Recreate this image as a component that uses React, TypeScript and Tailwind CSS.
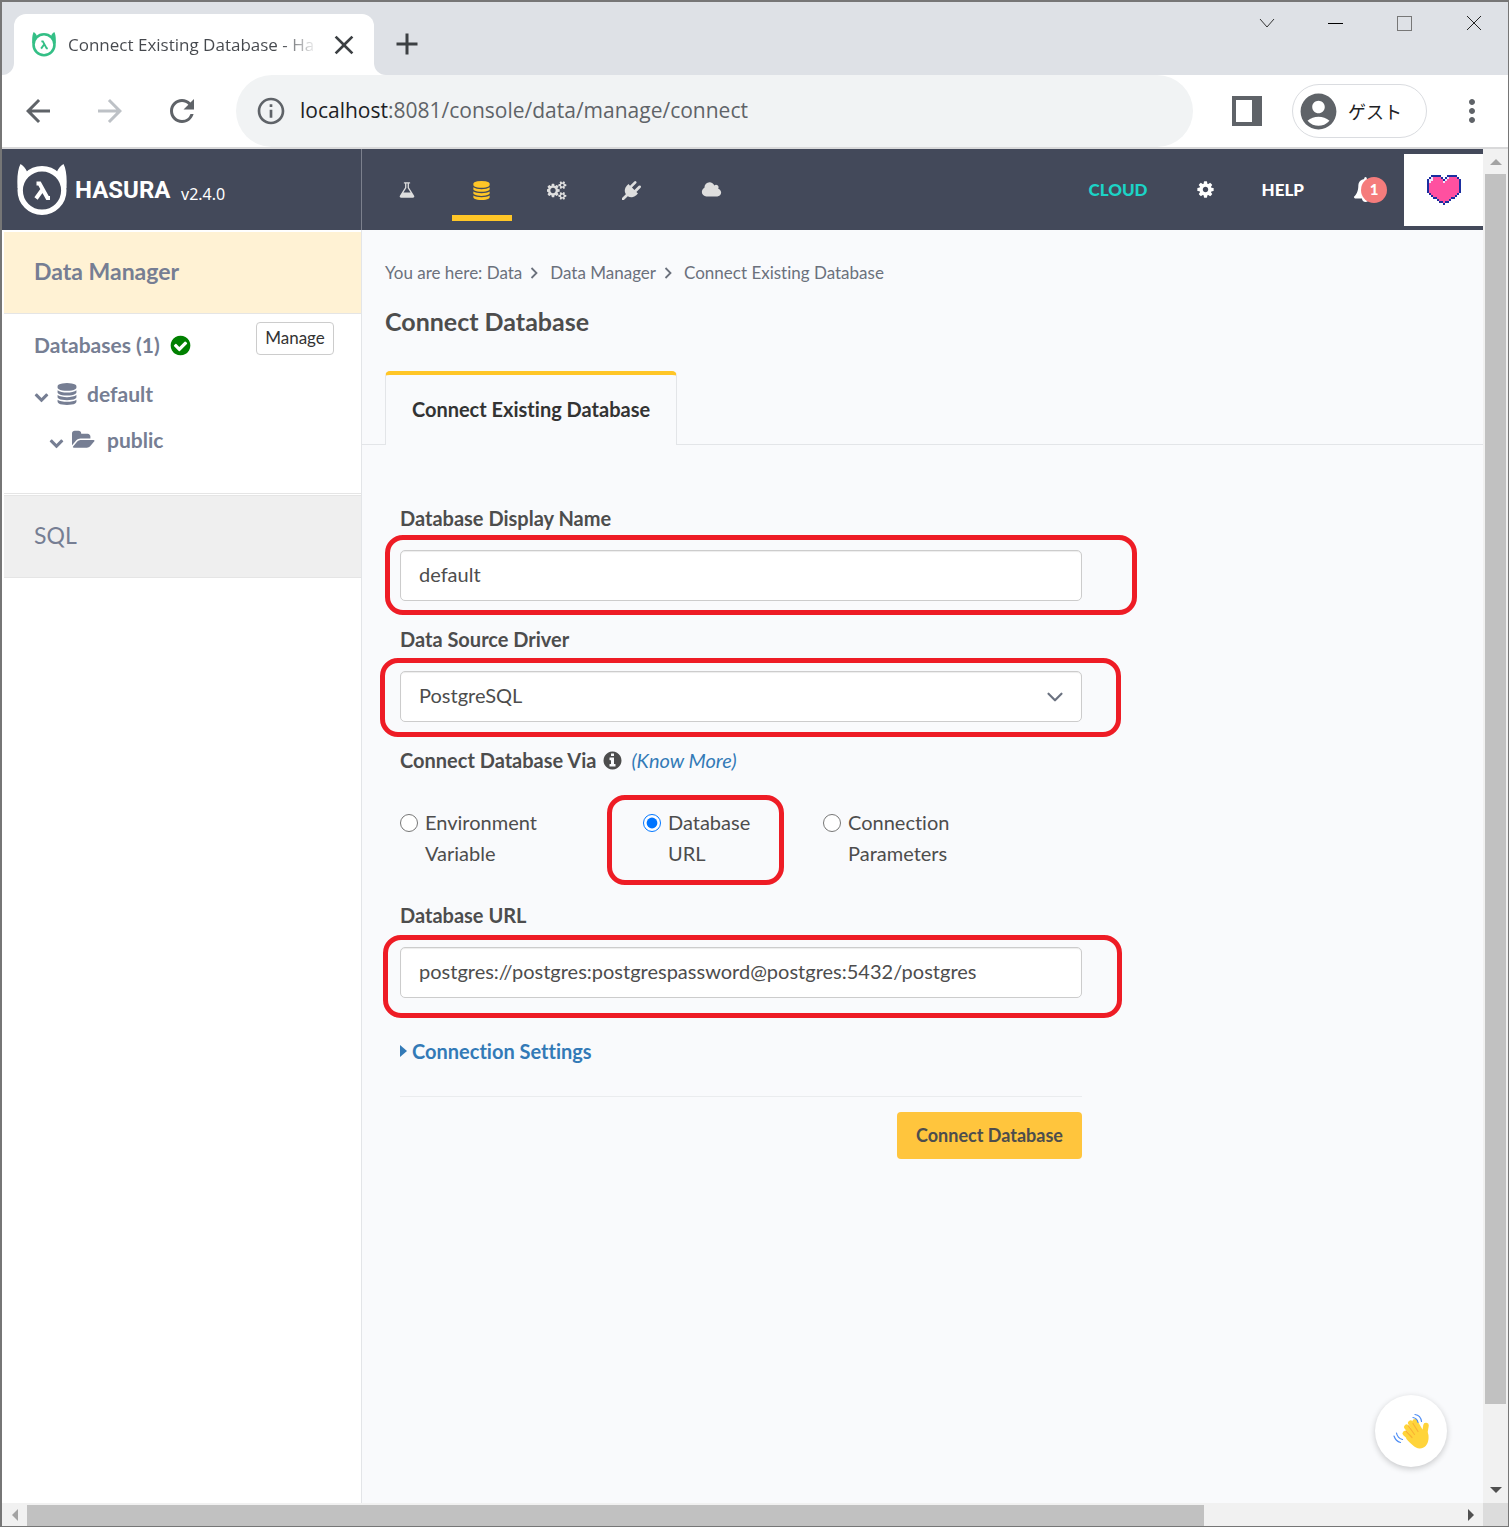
import React from "react";
import {
  MdAccountCircle,
  MdAdd,
  MdArrowBack,
  MdArrowForward,
  MdClose,
  MdInfoOutline,
  MdMoreVert,
  MdRefresh,
} from "react-icons/md";
import { ChevronDown } from "lucide-react";

const ICONS = {
  flask:
    "M1591 1448q56 89 21.5 152.5t-140.5 63.5h-1152q-106 0-140.5-63.5t21.5-152.5l503-793v-399h-64q-26 0-45-19t-19-45 19-45 45-19h512q26 0 45 19t19 45-19 45-45 19h-64v399zm-779-725l-272 429h712l-272-429-20-31v-436h-128v436z",
  database:
    "M896 768q237 0 443-43t325-127v170q0 69-103 128t-280 93.5-385 34.5-385-34.5-280-93.5-103-128v-170q119 84 325 127t443 43zm0 768q237 0 443-43t325-127v170q0 69-103 128t-280 93.5-385 34.5-385-34.5-280-93.5-103-128v-170q119 84 325 127t443 43zm0-384q237 0 443-43t325-127v170q0 69-103 128t-280 93.5-385 34.5-385-34.5-280-93.5-103-128v-170q119 84 325 127t443 43zm0-1152q208 0 385 34.5t280 93.5 103 128v128q0 69-103 128t-280 93.5-385 34.5-385-34.5-280-93.5-103-128v-128q0-69 103-128t280-93.5 385-34.5z",
  cogs:
    "M832 896q0-106-75-181t-181-75-181 75-75 181 75 181 181 75 181-75 75-181zm768 512q0-52-38-90t-90-38-90 38-38 90q0 53 37.5 90.5t90.5 37.5 90.5-37.5 37.5-90.5zm0-1024q0-52-38-90t-90-38-90 38-38 90q0 53 37.5 90.5t90.5 37.5 90.5-37.5 37.5-90.5zm-384 421v185q0 10-7 19.5t-16 10.5l-155 24q-11 35-32 76 34 48 90 115 7 11 7 20 0 12-7 19-23 30-82.5 89.5t-78.5 59.5q-11 0-21-7l-115-90q-37 19-77 31-11 108-23 155-7 24-30 24h-186q-11 0-20-7.5t-10-17.5l-23-153q-34-10-75-31l-118 89q-7 7-20 7-11 0-21-8-144-133-144-160 0-9 7-19 10-14 41-53t47-61q-23-44-35-82l-152-24q-10-1-17-9.5t-7-19.5v-185q0-10 7-19.5t16-10.5l155-24q11-35 32-76-34-48-90-115-7-11-7-20 0-12 7-20 22-30 82-89t79-59q11 0 21 7l115 90q34-18 77-32 11-108 23-154 7-24 30-24h186q11 0 20 7.5t10 17.5l23 153q34 10 75 31l118-89q8-7 20-7 11 0 21 8 144 133 144 160 0 8-7 19-12 16-42 54t-45 60q23 48 34 82l152 23q10 2 17 10.5t7 19.5zm640 533v140q0 16-149 31-12 27-30 52 51 113 51 138 0 4-4 7-122 71-124 71-8 0-46-47t-52-68q-20 2-30 2t-30-2q-14 21-52 68t-46 47q-2 0-124-71-4-3-4-7 0-25 51-138-18-25-30-52-149-15-149-31v-140q0-16 149-31 13-29 30-52-51-113-51-138 0-4 4-7 4-2 35-20t59-34 30-16q8 0 46 46.5t52 67.5q20-2 30-2t30 2q51-71 92-112l6-2q4 0 124 70 4 3 4 7 0 25-51 138 17 23 30 52 149 15 149 31zm0-1024v140q0 16-149 31-12 27-30 52 51 113 51 138 0 4-4 7-122 71-124 71-8 0-46-47t-52-68q-20 2-30 2t-30-2q-14 21-52 68t-46 47q-2 0-124-71-4-3-4-7 0-25 51-138-18-25-30-52-149-15-149-31v-140q0-16 149-31 13-29 30-52-51-113-51-138 0-4 4-7 4-2 35-20t59-34 30-16q8 0 46 46.5t52 67.5q20-2 30-2t30 2q51-71 92-112l6-2q4 0 124 70 4 3 4 7 0 25-51 138 17 23 30 52 149 15 149 31z",
  plug:
    "M1755 453q37 38 37 90.5t-37 90.5l-401 400 150 150-160 160q-163 163-389.5 186.5t-411.5-100.5l-362 362h-181v-181l362-362q-124-185-100.5-411.5t186.5-389.5l160-160 150 150 400-401q38-37 91-37t90 37 37 90.5-37 90.5l-400 401 234 234 401-400q38-37 91-37t90 37z",
  cloud:
    "M1984 1152q0 159-112.5 271.5t-271.5 112.5h-1088q-185 0-316.5-131.5t-131.5-316.5q0-132 71-241.5t187-163.5q-2-28-2-43 0-212 150-362t362-150q158 0 286.5 88t187.5 230q70-62 166-62 106 0 181 75t75 181q0 75-41 138 129 30 213 134.5t84 239.5z",
  cog:
    "M1152 896q0-106-75-181t-181-75-181 75-75 181 75 181 181 75 181-75 75-181zm512-109v222q0 12-8 23t-20 13l-185 28q-19 54-39 91 35 50 107 138 10 12 10 25t-9 23q-27 37-99 108t-94 71q-12 0-26-9l-138-108q-44 23-91 38-16 136-29 186-7 28-36 28h-222q-14 0-24.5-8.5t-11.5-21.5l-28-184q-49-16-90-37l-141 107q-10 9-25 9-14 0-25-11-126-114-165-168-7-10-7-23 0-12 8-23 15-21 51-66.5t54-70.5q-27-50-41-99l-183-27q-13-2-21-12.5t-8-23.5v-222q0-12 8-23t19-13l186-28q14-46 39-92-40-57-107-138-10-12-10-24 0-10 9-23 26-36 98.5-107.5t94.5-71.5q13 0 26 10l138 107q44-23 91-38 16-136 29-186 7-28 36-28h222q14 0 24.5 8.500t11.500 21.500l28 184q49 16 90 37l142-107q9-9 24-9 13 0 25 10 129 119 165 170 7 8 7 22 0 12-8 23-15 21-51 66.500t-54 70.500q26 50 41 98l183 28q13 2 21 12.500t8 23.500z",
  bell:
    "M1728 1408q0 52-38 90t-90 38h-448q0 106-75 181t-181 75-181-75-75-181h-448q-52 0-90-38t-38-90q50-42 91-88t85-119.500 74.500-158.500 50-206 19.500-260q0-152 117-282.500t307-158.500q-8-19-8-39 0-40 28-68t68-28 68 28 28 68q0 20-8 39 190 28 307 158.500t117 282.500q0 139 19.500 260t50 206 74.500 158.500 85 119.500 91 88z",
  check:
    "M1412 734q0-28-18-46l-91-90q-19-19-45-19t-45 19l-408 407-226-226q-19-19-45-19t-45 19l-91 90q-18 18-18 46 0 27 18 45l362 362q19 19 45 19 27 0 46-19l543-543q18-18 18-45zm252 162q0 209-103 385.5t-279.5 279.5-385.5 103-385.5-103-279.5-279.5-103-385.5 103-385.5 279.5-279.5 385.5-103 385.5 103 279.5 279.5 103 385.5z",
  chevron:
    "M1683 808l-742 741q-19 19-45 19t-45-19l-742-741q-19-19-19-45.5t19-45.5l166-165q19-19 45-19t45 19l531 531 531-531q19-19 45-19t45 19l166 165q19 19 19 45.5t-19 45.5z",
  folder:
    "M1879 952q0 31-31 66l-336 396q-43 51-120.5 86.5t-143.5 35.5h-1088q-34 0-60.500-13t-26.500-43q0-31 31-66l336-396q43-51 120.500-86.500t143.500-35.500h1088q34 0 60.500 13t26.500 43zm-343-344v160h-832q-94 0-197 47.500t-164 119.500l-337 396-5 6q0-4-.5-12.500t-.5-12.500v-960q0-92 66-158t158-66h320q92 0 158 66t66 158v32h544q92 0 158 66t66 158z",
  info:
    "M1152 1376v-160q0-14-9-23t-23-9h-96v-512q0-14-9-23t-23-9h-320q-14 0-23 9t-9 23v160q0 14 9 23t23 9h96v320h-96q-14 0-23 9t-9 23v160q0 14 9 23t23 9h448q14 0 23-9t9-23zm-128-896v-160q0-14-9-23t-23-9h-192q-14 0-23 9t-9 23v160q0 14 9 23t23 9h192q14 0 23-9t9-23zm640 416q0 209-103 385.5t-279.5 279.5-385.5 103-385.5-103-279.5-279.5-103-385.5 103-385.5 279.5-279.5 385.5-103 385.5 103 279.5 279.5 103 385.5z",
};

function Icon({
  name,
  className,
  box = "0 0 1792 1792",
}: {
  name: keyof typeof ICONS;
  className: string;
  box?: string;
}) {
  return (
    <svg viewBox={box} fill="currentColor" className={className} aria-hidden="true">
      <path d={ICONS[name]} />
    </svg>
  );
}

function HasuraMark({ className }: { className: string }) {
  return (
    <svg viewBox="0 0 50 52" className={className} fill="none" aria-hidden="true">
      <circle cx="25" cy="26.500" r="21.800" stroke="currentColor" strokeWidth="5.400" />
      <path
        d="M0.600 24C-0.200 14 0.800 5 3.500 0c3 1.500 5 4.500 6.500 7.500L4 24zM49.400 24C50.200 14 49.200 5 46.500 0c-3 1.500-5 4.500-6.500 7.500L46 24z"
        fill="currentColor"
      />
      <path
        d="M19.500 19.500h3l8 14.500h2.500M25.500 25.500L19 34.500"
        stroke="currentColor"
        strokeWidth="4"
      />
    </svg>
  );
}

const HEART = [
  "..BBBBB...BBBBB..",
  ".BWPPPPB.BWPPPPB.",
  "BWWPPPPPBWPPPPPPB",
  "BWPPPPPPWPPPPPPPB",
  "BPPPPPPPPPPPPPPPB",
  "BPPPPPPPPPPPPPPPB",
  "BPPPPPPPPPPPPPPPB",
  "BPPPPPPPPPPPPPPPB",
  "BPPPPPPPPPPPPPPPB",
  ".BPPPPPPPPPPPPPB.",
  "..BPPPPPPPPPPPB..",
  "...BBPPPPPPPBB...",
  ".....BPPPPPB.....",
  "......BBPBB......",
  "........B........",
];
const HEART_COLORS: Record<string, string> = { B: "#1b2fa0", P: "#ff50a0", W: "#f4e6fb" };

function PixelHeart() {
  return (
    <svg viewBox="0 0 17 15" shapeRendering="crispEdges" className="h-[30px] w-[36px]" aria-hidden="true">
      {HEART.flatMap((row, y) =>
        row.split("").map((c, x) =>
          c === "." ? null : (
            <rect key={`${x}-${y}`} x={x} y={y} width="1" height="1" fill={HEART_COLORS[c]} />
          ),
        ),
      )}
    </svg>
  );
}

function WavingHand() {
  return (
    <svg viewBox="0 0 36 36" className="h-9 w-9" fill="none" strokeLinecap="round" aria-hidden="true">
      <g stroke="#ffd43b" strokeWidth="5">
        <path d="M12 20.500l10 9M13.500 14l10 11M17.500 10l9 13M22 8.500l8 14" />
        <path d="M33 12.500l-2 12" strokeWidth="5.500" />
      </g>
      <path
        d="M16 23.500L29 16.500C35 17 36 21 35.500 26 35 32 31 35.800 26.500 35.500 22 35.200 17 30 13 25.500z"
        fill="#ffd43b"
      />
      <path d="M13 18l6 6.500M15.500 13l6 8.500M20 10.500l5 8" stroke="#f9b233" strokeWidth="1.200" />
      <path
        d="M22 1.500c3.500.5 6 3 6.500 7M20 4.500c3 .5 4.500 2.500 5 5M3.500 20c.5 3 2.500 5.500 6 6.500M1 23c1 3 3 5.500 6.500 6.500"
        stroke="#4e8df5"
        strokeWidth="1.200"
      />
    </svg>
  );
}

function TitleBar() {
  return (
    <div className="flex h-[73px] shrink-0 items-end bg-[#dee1e6]">
      <div className="h-3 w-3 bg-white">
        <div className="h-3 w-3 rounded-br-xl bg-[#dee1e6]" />
      </div>
      <div className="flex h-[61px] w-[360px] items-center rounded-t-xl bg-white pl-[18px]">
        <HasuraMark className="h-[25px] w-6 text-[#34bf86]" />
        <span className="ml-3 w-[250px] shrink-0 bg-linear-to-r from-[#45484d] from-85% to-transparent to-100% bg-clip-text font-['Open_Sans','Noto_Sans',sans-serif] text-[17px] whitespace-nowrap text-transparent">
          Connect Existing Database - Ha
        </span>
        <button type="button" aria-label="Close tab" className="ml-[10px] text-[#3c4043]">
          <MdClose className="size-8" />
        </button>
      </div>
      <div className="h-3 w-3 bg-white">
        <div className="h-3 w-3 rounded-bl-xl bg-[#dee1e6]" />
      </div>
      <button type="button" aria-label="New tab" className="mb-[13px] ml-[3px] text-[#3c4043]">
        <MdAdd className="size-9" />
      </button>
      <div className="ml-auto flex self-start">
        <button type="button" aria-label="Search tabs" className="flex h-[42px] w-[69px] items-center justify-center">
          <svg viewBox="0 0 16 16" className="size-4" fill="none" stroke="#333"><path d="M1 4l7 8 7-8" /></svg>
        </button>
        <button type="button" aria-label="Minimize" className="flex h-[42px] w-[69px] items-center justify-center">
          <span className="h-px w-[15px] bg-black" />
        </button>
        <button type="button" aria-label="Maximize" className="flex h-[42px] w-[69px] items-center justify-center">
          <span className="size-[15px] border border-[#777]" />
        </button>
        <button type="button" aria-label="Close" className="flex h-[42px] w-[69px] items-center justify-center">
          <svg viewBox="0 0 16 16" className="size-4" fill="none" stroke="#222"><path d="M1 1l14 14M15 1L1 15" /></svg>
        </button>
      </div>
    </div>
  );
}

function Toolbar() {
  return (
    <div className="flex h-[74px] shrink-0 items-center border-b-2 border-[#d9d9da] bg-white text-[#5f6368]">
      <button type="button" aria-label="Back" className="flex w-[72px] justify-center">
        <MdArrowBack className="size-9" />
      </button>
      <button type="button" aria-label="Forward" className="flex w-[72px] justify-center text-[#bdc1c6]">
        <MdArrowForward className="size-9" />
      </button>
      <button type="button" aria-label="Reload" className="flex w-[72px] justify-center">
        <MdRefresh className="size-9" />
      </button>
      <div className="ml-[18px] flex h-[72px] flex-1 items-center rounded-full bg-[#f1f3f4] pl-[19px]">
        <MdInfoOutline className="size-8" />
        <span className="ml-[13px] font-['Open_Sans','Noto_Sans',sans-serif] text-[21px]">
          <span className="text-[#202124]">localhost</span>:8081/console/data/manage/connect
        </span>
      </div>
      <button type="button" aria-label="Side panel" className="ml-[39px] flex size-[30px] items-center bg-[#5f6368] pl-1">
        <span className="h-[22px] w-4 bg-white" />
      </button>
      <button
        type="button"
        className="ml-[30px] flex h-[54px] w-[135px] items-center rounded-full border border-[#dadce0] pl-1 font-['Noto_Sans_CJK_JP',sans-serif] text-[18px] text-[#202124]"
      >
        <MdAccountCircle className="size-[43px] text-[#5f6368]" />
        <span className="ml-2">ゲスト</span>
      </button>
      <button type="button" aria-label="Menu" className="mr-[18px] ml-[27px]">
        <MdMoreVert className="size-9" />
      </button>
    </div>
  );
}

function NavLink({ label, active, wide, children }: { label: string; active?: boolean; wide?: boolean; children: React.ReactNode }) {
  return (
    <a
      href="#"
      aria-label={label}
      className={`flex h-full flex-col items-center ${wide ? "w-[85px]" : "w-[75px]"} ${active ? "text-[#ffc627]" : "text-[#dedede]"}`}
    >
      <span className="flex h-[66px] items-center pt-4">{children}</span>
      {active && <span className="h-[6px] w-[60px] bg-[#ffc627]" />}
    </a>
  );
}

function AppHeader() {
  return (
    <header className="flex h-[81px] shrink-0 bg-[#43495a] text-white">
      <div className="flex w-[360px] shrink-0 items-center border-r border-[#7c808d] pl-[15px]">
        <HasuraMark className="h-[52px] w-[50px]" />
        <span className="ml-2 w-[92px] font-[Roboto,sans-serif] text-[24px] font-bold">HASURA</span>
        <span className="ml-[14px] pt-2 font-['Noto_Sans',sans-serif] text-[16px]">v2.4.0</span>
      </div>
      <nav className="flex pl-[7px]">
        <NavLink label="API"><Icon name="flask" className="size-[18px]" /></NavLink>
        <NavLink label="Data" active><Icon name="database" className="size-[19px]" /></NavLink>
        <NavLink label="Actions"><Icon name="cogs" box="0 0 1920 1792" className="h-[19px] w-5" /></NavLink>
        <NavLink label="Remote schemas"><Icon name="plug" className="size-[19px]" /></NavLink>
        <NavLink label="Events" wide><Icon name="cloud" box="0 0 2048 1792" className="h-[18px] w-[21px]" /></NavLink>
      </nav>
      <div className="ml-auto flex items-center text-[17px] font-black">
        <a href="#" className="text-[#1cd3c6]">CLOUD</a>
        <button type="button" aria-label="Settings" className="ml-[48px]">
          <Icon name="cog" className="size-[19px]" />
        </button>
        <a href="#" className="ml-[47px]">HELP</a>
        <button type="button" aria-label="Notifications" className="ml-[49px] flex items-center">
          <Icon name="bell" className="size-[25px]" />
          <span className="-ml-[17px] flex size-[26px] items-center justify-center rounded-full bg-[#f57c7c] text-[15px]">1</span>
        </button>
        <button type="button" aria-label="Love" className="ml-[17px] flex h-[72px] w-[79px] items-center justify-center bg-white">
          <PixelHeart />
        </button>
      </div>
    </header>
  );
}

function Sidebar() {
  return (
    <aside className="w-[360px] shrink-0 border-r border-[#e3e5e8] bg-white pl-0.5 text-[#767e93]">
      <a href="#" className="mt-0.5 flex h-[82px] items-center border-b border-[#e5e5e5] bg-[#fff2d4] pb-0.5 pl-[30px] text-[23px] font-bold">
        Data Manager
      </a>
      <div className="h-[180px] border-b border-[#e5e5e5] pl-[30px] text-[21px] font-bold">
        <div className="flex h-[57px] items-start justify-between pt-2 pr-[27px]">
          <span className="flex h-[46px] items-center gap-[9px]">
            Databases (1)
            <Icon name="check" className="size-[23px] text-[#008000]" />
          </span>
          <button type="button" className="h-[33px] w-[78px] rounded-sm border border-[#ccc] bg-white pb-0.5 text-[17px] font-normal text-[#333]">
            Manage
          </button>
        </div>
        <div className="flex h-[46px] items-center">
          <Icon name="chevron" className="mt-1 size-[15px]" />
          <Icon name="database" className="ml-[7px] size-[22px]" />
          <span className="ml-[9px]">default</span>
        </div>
        <div className="flex h-[46px] items-center pl-[15px]">
          <Icon name="chevron" className="mt-1 size-[15px]" />
          <Icon name="folder" box="0 0 1920 1792" className="ml-2 h-[22px] w-[23px]" />
          <span className="ml-3">public</span>
        </div>
      </div>
      <a href="#" className="mt-px flex h-[83px] items-center border-y border-[#e5e5e5] bg-[#efefef] pb-0.5 pl-[30px] text-[23px]">
        SQL
      </a>
    </aside>
  );
}

function Highlight({ className }: { className: string }) {
  return <span className={`pointer-events-none absolute rounded-[18px] border-[5px] border-[#ee1c25] ${className}`} />;
}

const fieldClass =
  "h-[51px] w-full rounded-[5px] border border-[#ccc] bg-white px-[18px] pb-[3px] shadow-[inset_0_1px_1px_rgba(0,0,0,0.075)]";
const labelClass = "text-[20px] leading-7 font-bold";

function ConnectForm() {
  return (
    <form className="mt-[59px] ml-[38px] w-[682px] max-w-full text-[20px] text-[#4d4d4d]" onSubmit={(e) => e.preventDefault()}>
      <label htmlFor="db-name" className={`block ${labelClass}`}>Database Display Name</label>
      <div className="relative mt-[18px]">
        <input id="db-name" defaultValue="default" className={fieldClass} />
        <Highlight className="-top-[15px] -right-[55px] -bottom-[14px] -left-[15px]" />
      </div>
      <label htmlFor="driver" className={`mt-6 block ${labelClass}`}>Data Source Driver</label>
      <div className="relative mt-[18px]">
        <select id="driver" className={`appearance-none ${fieldClass}`}>
          <option>PostgreSQL</option>
        </select>
        <ChevronDown className="pointer-events-none absolute top-[13px] right-[14px] size-[26px] text-[#6b7280]" />
        <Highlight className="-top-[13px] -right-[39px] -bottom-[15px] -left-5" />
      </div>
      <fieldset className="mt-6">
        <legend className={`flex items-center ${labelClass}`}>
          Connect Database Via
          <Icon name="info" className="ml-[6px] size-[21px]" />
          <a href="#" className="ml-2 font-normal text-[#337ab7] italic">(Know More)</a>
        </legend>
        <div className="mt-[33px] grid grid-cols-[243px_180px_1fr] leading-[31px]">
          <label className="flex w-[150px] items-start gap-[7px]">
            <input type="radio" name="via" className="mt-[7px] size-[18px] shrink-0" />
            Environment Variable
          </label>
          <label className="relative flex w-[110px] items-start gap-[7px]">
            <input type="radio" name="via" defaultChecked className="mt-[7px] size-[18px] shrink-0" />
            Database URL
            <Highlight className="-top-3 -right-[31px] -bottom-4 -left-9" />
          </label>
          <label className="flex w-[150px] items-start gap-[7px]">
            <input type="radio" name="via" className="mt-[7px] size-[18px] shrink-0" />
            Connection Parameters
          </label>
        </div>
      </fieldset>
      <label htmlFor="db-url" className={`mt-8 block ${labelClass}`}>Database URL</label>
      <div className="relative mt-[18px]">
        <input id="db-url" defaultValue="postgres://postgres:postgrespassword@postgres:5432/postgres" className={fieldClass} />
        <Highlight className="-top-3 -right-10 -bottom-5 -left-[17px]" />
      </div>
      <button type="button" className="mt-[39px] flex h-7 items-center gap-[5px] font-bold text-[#337ab7]">
        <span className="border-y-[6px] border-l-[7px] border-y-transparent border-l-[#337ab7]" />
        Connection Settings
      </button>
      <hr className="mt-[31px] border-[#eaecee]" />
      <div className="mt-[15px] flex justify-end">
        <button type="submit" className="h-[47px] w-[185px] rounded-sm bg-[#ffc53d] text-[18px] font-bold">
          Connect Database
        </button>
      </div>
    </form>
  );
}

function Crumb() {
  return (
    <svg viewBox="0 0 8 12" className="mr-3 ml-2 h-3 w-2" fill="none" stroke="currentColor" strokeWidth="1.800" aria-hidden="true">
      <path d="M1.500 1l5 5-5 5" />
    </svg>
  );
}

function Main() {
  return (
    <main className="relative min-w-0 flex-1 bg-[#f9fafc]">
      <nav aria-label="Breadcrumb" className="flex items-center pt-8 pl-[23px] text-[17px] leading-[22px] text-[#6b717c]">
        <span>You are here: <a href="#">Data</a></span>
        <Crumb />
        <a href="#">Data Manager</a>
        <Crumb />
        <span>Connect Existing Database</span>
      </nav>
      <h2 className="mt-[21px] pl-[23px] text-[25px] leading-8 font-bold text-[#4d4d4d]">Connect Database</h2>
      <div className="mt-[34px] flex border-b border-[#e3e5e8] pl-[23px]">
        <a
          href="#"
          className="-mb-px flex h-[74px] w-[292px] items-center justify-center rounded-t-[5px] border-x border-t-4 border-x-[#e3e5e8] border-t-[#ffc627] bg-[#f9fafc] pb-[3px] text-[20px] font-bold text-[#333]"
        >
          Connect Existing Database
        </a>
      </div>
      <ConnectForm />
      <button
        type="button"
        aria-label="Say hello"
        className="absolute right-9 bottom-9 flex size-[72px] items-center justify-center rounded-full bg-white shadow-[0_2px_6px_rgba(0,0,0,0.2)]"
      >
        <WavingHand />
      </button>
    </main>
  );
}

export default function App() {
  return (
    <div className="flex h-screen flex-col border-2 border-r border-b border-[#767676] bg-white font-[Lato,'Noto_Sans',sans-serif] [font-variant-ligatures:none]">
      <TitleBar />
      <Toolbar />
      <div className="flex min-h-0 flex-1">
        <div className="flex min-w-0 flex-1 flex-col">
          <AppHeader />
          <div className="flex min-h-0 flex-1">
            <Sidebar />
            <Main />
          </div>
        </div>
        <div className="flex w-[25px] shrink-0 flex-col items-center bg-[#f1f1f1]">
          <div className="flex h-[25px] shrink-0 items-center">
            <span className="border-x-[6px] border-b-[6px] border-x-transparent border-b-[#a3a3a3]" />
          </div>
          <div className="w-[21px] flex-[1230] bg-[#c1c1c1]" />
          <div className="flex-[73]" />
          <div className="flex h-[26px] shrink-0 items-center">
            <span className="border-x-[6px] border-t-[6px] border-x-transparent border-t-[#505050]" />
          </div>
        </div>
      </div>
      <div className="flex h-[23px] shrink-0 bg-[#f1f1f1]">
        <div className="flex w-[25px] items-center justify-center">
          <span className="border-y-[6px] border-r-[6px] border-y-transparent border-r-[#a3a3a3]" />
        </div>
        <div className="mt-0.5 flex-[1177] bg-[#c1c1c1]" />
        <div className="flex-[254]" />
        <div className="flex w-[25px] items-center justify-center">
          <span className="border-y-[6px] border-l-[6px] border-y-transparent border-l-[#505050]" />
        </div>
        <div className="w-[25px] bg-[#dcdcdc]" />
      </div>
    </div>
  );
}
